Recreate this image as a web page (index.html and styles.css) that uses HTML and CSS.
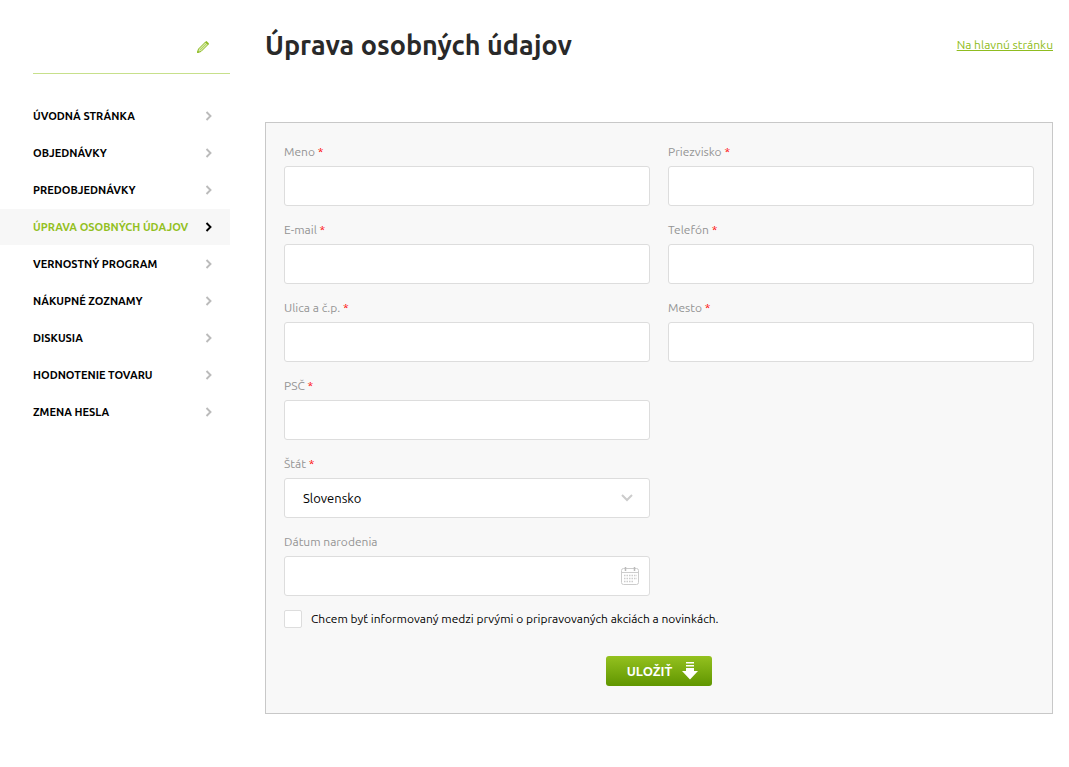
FILE: index.html
```html
<!DOCTYPE html>
<html lang="sk">
<head>
  <meta charset="UTF-8">
  <meta name="viewport" content="width=device-width, initial-scale=1.0">
  <title>Úprava osobných údajov</title>
  <link rel="stylesheet" href="styles.css">
</head>
<body>
  <svg width="0" height="0" class="sprite" aria-hidden="true">
    <symbol id="arrow" viewBox="0 0 8 10">
      <path d="M1.500 1L5.500 5L1.500 9" fill="none" stroke="currentColor" stroke-width="1.900"/>
    </symbol>
  </svg>

  <div class="page">
    <aside class="sidebar">
      <div class="user">
        <a href="#" class="edit" aria-label="Upraviť">
          <svg width="14" height="14" viewBox="0 0 14 14">
            <path d="M1.500 12.500L2.500 9L9.500 2L12 4.500L5 11.500Z" fill="#d6e9a8" stroke="#8fbc26" stroke-width="1"/>
            <path d="M4 10L10.500 3.500" fill="none" stroke="#a9cf50" stroke-width="0.800"/>
            <path d="M9 2L10.500 1L13 3.500L12 5Z" fill="#8fbc26"/>
            <path d="M1 13L1.700 10.500L3.500 12.300Z" fill="#8fbc26"/>
          </svg>
        </a>
      </div>
      <nav>
        <ul class="menu">
          <li><a href="#">Úvodná stránka <svg><use href="#arrow"/></svg></a></li>
          <li><a href="#">Objednávky <svg><use href="#arrow"/></svg></a></li>
          <li><a href="#">Predobjednávky <svg><use href="#arrow"/></svg></a></li>
          <li><a href="#" class="active">Úprava osobných údajov <svg><use href="#arrow"/></svg></a></li>
          <li><a href="#">Vernostný program <svg><use href="#arrow"/></svg></a></li>
          <li><a href="#">Nákupné zoznamy <svg><use href="#arrow"/></svg></a></li>
          <li><a href="#">Diskusia <svg><use href="#arrow"/></svg></a></li>
          <li><a href="#">Hodnotenie tovaru <svg><use href="#arrow"/></svg></a></li>
          <li><a href="#">Zmena hesla <svg><use href="#arrow"/></svg></a></li>
        </ul>
      </nav>
    </aside>

    <main class="content">
      <header class="head">
        <h1>Úprava osobných údajov</h1>
        <a href="#">Na hlavnú stránku</a>
      </header>

      <form class="form">
        <div class="fields">
          <div class="field">
            <label for="meno">Meno <span>*</span></label>
            <input type="text" id="meno">
          </div>
          <div class="field">
            <label for="priezvisko">Priezvisko <span>*</span></label>
            <input type="text" id="priezvisko">
          </div>
          <div class="field">
            <label for="email">E-mail <span>*</span></label>
            <input type="email" id="email">
          </div>
          <div class="field">
            <label for="telefon">Telefón <span>*</span></label>
            <input type="tel" id="telefon">
          </div>
          <div class="field">
            <label for="ulica">Ulica a č.p. <span>*</span></label>
            <input type="text" id="ulica">
          </div>
          <div class="field">
            <label for="mesto">Mesto <span>*</span></label>
            <input type="text" id="mesto">
          </div>
          <div class="field left">
            <label for="psc">PSČ <span>*</span></label>
            <input type="text" id="psc">
          </div>
          <div class="field left">
            <label for="stat">Štát <span>*</span></label>
            <div class="control">
              <select id="stat">
                <option>Slovensko</option>
                <option>Česká republika</option>
              </select>
              <svg class="chevron" width="12" height="8" viewBox="0 0 12 8">
                <path d="M1 1L6 6L11 1" fill="none" stroke="#ccc" stroke-width="2"/>
              </svg>
            </div>
          </div>
          <div class="field left">
            <label for="datum">Dátum narodenia</label>
            <div class="control">
              <input type="text" id="datum">
              <svg class="calendar" width="18" height="18" viewBox="0 0 18 18">
                <rect x="0.500" y="1.500" width="17" height="16" rx="2" fill="none" stroke="#ccc"/>
                <path d="M1 5.500H17" stroke="#ccc"/>
                <path d="M4.500 0V4M13.500 0V4" stroke="#bbb" stroke-width="1.500"/>
                <path d="M3 8.500H16M3 11.500H16M3 14.500H13" stroke="#ccc" stroke-width="1.500" stroke-dasharray="1.500 1"/>
              </svg>
            </div>
          </div>
        </div>

        <div class="news">
          <input type="checkbox" id="novinky">
          <label for="novinky">Chcem byť informovaný medzi prvými o pripravovaných akciách a novinkách.</label>
        </div>

        <button type="submit" class="save">
          Uložiť
          <svg width="16" height="18" viewBox="0 0 16 18">
            <path d="M4 0H12V1.500H4ZM4 3H12V4.500H4ZM4 6H12V9H16L8 17.500L0 9H4Z" fill="#fff"/>
          </svg>
        </button>
      </form>
    </main>
  </div>
</body>
</html>
```

FILE: styles.css
```css
* {
  box-sizing: border-box;
}
body {
  margin: 0;
  background: #fff;
  color: #000;
  font-family: Ubuntu, "Noto Sans", sans-serif;
  font-size: 12px;
  line-height: 20px;
}
.sprite {
  position: absolute;
}
.page {
  display: flex;
}

/* sidebar */
.sidebar {
  flex: 0 0 230px;
}
.user {
  display: flex;
  justify-content: flex-end;
  margin-left: 33px;
  padding: 40px 20px 19px;
  border-bottom: 1px solid #c7e08b;
}
.edit svg {
  display: block;
}
.menu {
  list-style: none;
  margin: 24px 0 0;
  padding: 0;
}
.menu li {
  margin-bottom: 1px;
}
.menu a {
  display: flex;
  align-items: center;
  justify-content: space-between;
  height: 36px;
  padding: 0 17px 0 33px;
  color: #000;
  font-size: 11px;
  font-weight: 600;
  text-transform: uppercase;
  text-decoration: none;
}
.menu svg {
  width: 8px;
  height: 10px;
  color: #bbb;
}
.menu .active {
  background: #f7f7f7;
  color: #93c01f;
}
.menu .active svg {
  color: #000;
}

/* content */
.content {
  flex: 1;
  padding: 25px 16px 53px 35px;
}
.head {
  display: flex;
  align-items: center;
  justify-content: space-between;
  margin-bottom: 57px;
}
h1 {
  margin: 0;
  color: #292929;
  font-size: 27px;
  font-weight: 700;
  line-height: 40px;
}
.head a {
  color: #8fbc20;
}

/* form */
.form {
  padding: 19px 18px 27px;
  border: 1px solid #c8c8c8;
  background: #f8f8f8;
}
.fields {
  display: grid;
  grid-template-columns: 1fr 1fr;
  gap: 14px 18px;
}
.left {
  grid-column: 1;
}
.field label {
  display: block;
  margin-bottom: 4px;
  color: #949494;
}
.field label span {
  color: #f00;
}
.field input,
.field select {
  display: block;
  width: 100%;
  height: 40px;
  padding: 0 18px;
  border: 1px solid #ddd;
  border-radius: 3px;
  background: #fff;
  color: #000;
  font-family: inherit;
  font-size: 13px;
  appearance: none;
}
.control {
  position: relative;
}
.control svg {
  position: absolute;
  pointer-events: none;
}
.chevron {
  top: 16px;
  right: 17px;
}
.calendar {
  top: 11px;
  right: 11px;
}
.news {
  display: flex;
  align-items: center;
  gap: 9px;
  margin-top: 13px;
}
.news input {
  width: 18px;
  height: 18px;
  margin: 0;
  border: 1px solid #ddd;
  border-radius: 2px;
  background: #fff;
  appearance: none;
}
.news input:checked {
  background: #8fc31f;
}
.save {
  display: flex;
  align-items: center;
  justify-content: center;
  gap: 10px;
  width: 106px;
  height: 30px;
  margin: 27px auto 0;
  padding: 0 7px 0 14px;
  border: 0;
  border-radius: 3px;
  background: linear-gradient(#94c11f, #609600);
  color: #fff;
  font-family: inherit;
  font-size: 13px;
  font-weight: 700;
  text-transform: uppercase;
  cursor: pointer;
}
```
